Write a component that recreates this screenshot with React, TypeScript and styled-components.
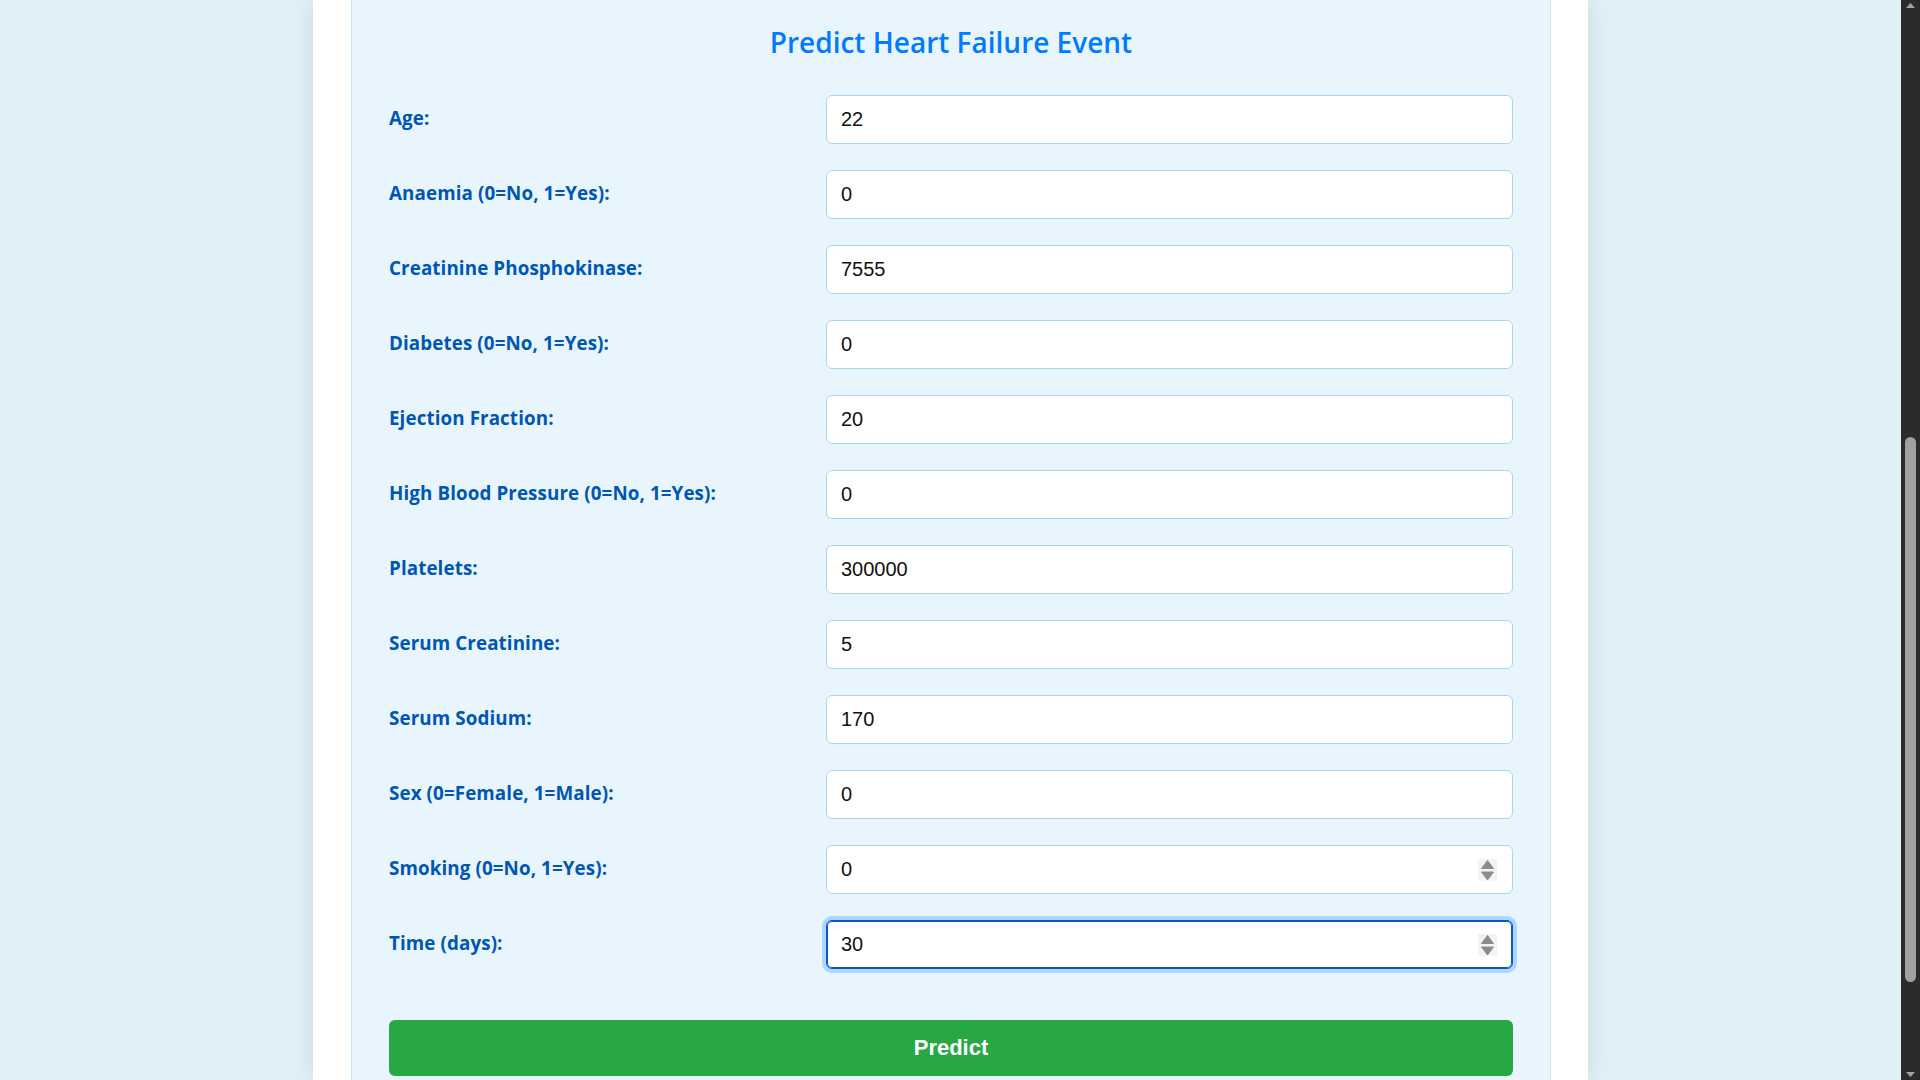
import React from "react";
import styled, { createGlobalStyle, css } from "styled-components";

const GlobalStyle = createGlobalStyle`
  html, body, #root {
    height: 100%;
  }
  body {
    margin: 0;
    background: #e0f0f7;
    font-family: "Open Sans", "Noto Sans", sans-serif;
  }
`;

const Page = styled.div`
  height: 100vh;
  overflow: hidden;
  display: flex;
`;

const Viewport = styled.div`
  flex: 1;
  display: flex;
  justify-content: center;
  overflow: hidden;
`;

const Container = styled.div`
  width: 1275px;
  flex: none;
  box-sizing: border-box;
  background: #ffffff;
  padding: 0 37px 0 38px;
  box-shadow: 0 0 20px rgba(0, 0, 0, 0.1);
  display: flex;
`;

const Panel = styled.div`
  flex: 1;
  background: #e8f5fd;
  border-left: 1px solid #c9e3f6;
  border-right: 1px solid #c9e3f6;
  padding: 25px 37px 0 37px;
  display: flex;
  flex-direction: column;
`;

const Title = styled.h2`
  margin: 0 0 36px;
  text-align: center;
  color: #007bff;
  font-family: "Open Sans", "Noto Sans", sans-serif;
  font-weight: 600;
  font-size: 28px;
  line-height: 34px;
`;

const Form = styled.form`
  display: flex;
  flex-direction: column;
  gap: 26px;
`;

const Row = styled.div`
  display: grid;
  grid-template-columns: 437px 1fr;
  align-items: center;
`;

const Label = styled.label`
  color: #0056b3;
  font-family: "Open Sans", "Noto Sans", sans-serif;
  font-weight: 700;
  font-size: 18.8px;
  line-height: 24px;
  letter-spacing: 0.1px;
  padding-bottom: 4px;
`;

const InputWrap = styled.div`
  position: relative;
  display: flex;
`;

const Input = styled.input<{ $focused?: boolean }>`
  box-sizing: border-box;
  width: 100%;
  height: 49px;
  padding: 0 40px 0 14px;
  border: 1px solid #a9d5f5;
  border-radius: 6px;
  background: #ffffff;
  color: #111111;
  font-family: "Liberation Sans", Arial, sans-serif;
  font-size: 20px;
  outline: none;
  -moz-appearance: textfield;

  &::-webkit-inner-spin-button,
  &::-webkit-outer-spin-button {
    -webkit-appearance: none;
    margin: 0;
  }

  ${(p) =>
    p.$focused &&
    css`
      border-color: #0b57c8;
      box-shadow: inset 0 0 0 1px #0b57c8, 0 0 0 4px #aed7fe;
    `}
`;

const Spinner = styled.svg`
  position: absolute;
  right: 16px;
  top: 50%;
  margin-top: -11px;
  width: 19px;
  height: 22px;
  pointer-events: none;
`;

const Button = styled.button`
  margin-top: 51px;
  height: 56px;
  width: 100%;
  border: none;
  border-radius: 6px;
  background: #28a745;
  color: #ffffff;
  font-family: "Liberation Sans", Arial, sans-serif;
  font-weight: 700;
  font-size: 22px;
  cursor: pointer;
`;

const ScrollBar = styled.svg`
  flex: none;
  width: 19px;
  height: 100vh;
  display: block;
`;

type Field = {
  label: string;
  value: string;
  spin?: boolean;
  focused?: boolean;
};

const fields: Field[] = [
  { label: "Age:", value: "22" },
  { label: "Anaemia (0=No, 1=Yes):", value: "0" },
  { label: "Creatinine Phosphokinase:", value: "7555" },
  { label: "Diabetes (0=No, 1=Yes):", value: "0" },
  { label: "Ejection Fraction:", value: "20" },
  { label: "High Blood Pressure (0=No, 1=Yes):", value: "0" },
  { label: "Platelets:", value: "300000" },
  { label: "Serum Creatinine:", value: "5" },
  { label: "Serum Sodium:", value: "170" },
  { label: "Sex (0=Female, 1=Male):", value: "0" },
  { label: "Smoking (0=No, 1=Yes):", value: "0", spin: true },
  { label: "Time (days):", value: "30", spin: true, focused: true },
];

function SpinIcon() {
  return (
    <Spinner viewBox="0 0 19 22">
      <rect x="0" y="0" width="19" height="22" fill="#f3f3f3" />
      <path d="M9.5 1.5 L15.5 9.5 L3.5 9.5 Z" fill="#8c8c8c" strokeLinejoin="round" stroke="#8c8c8c" strokeWidth="1" />
      <path d="M3.5 13 L15.5 13 L9.5 21 Z" fill="#8c8c8c" strokeLinejoin="round" stroke="#8c8c8c" strokeWidth="1" />
    </Spinner>
  );
}

function BrowserScrollBar() {
  return (
    <ScrollBar viewBox="0 0 19 1080" preserveAspectRatio="none">
      <rect x="0" y="0" width="19" height="1080" fill="#2b2b2b" />
      <path d="M9.5 3 L14 8 L5 8 Z" fill="#a3a3a3" />
      <rect x="4" y="437" width="11" height="545" rx="5.5" fill="#a0a0a0" />
      <path d="M5 1072 L14 1072 L9.5 1077 Z" fill="#a3a3a3" />
    </ScrollBar>
  );
}

export default function App() {
  return (
    <>
      <GlobalStyle />
      <Page>
        <Viewport>
          <Container>
            <Panel>
              <Title>Predict Heart Failure Event</Title>
              <Form onSubmit={(e) => e.preventDefault()}>
                {fields.map((f, i) => (
                  <Row key={i}>
                    <Label htmlFor={`f${i}`}>{f.label}</Label>
                    <InputWrap>
                      <Input
                        id={`f${i}`}
                        type="number"
                        defaultValue={f.value}
                        $focused={f.focused}
                      />
                      {f.spin && <SpinIcon />}
                    </InputWrap>
                  </Row>
                ))}
              </Form>
              <Button type="button">Predict</Button>
            </Panel>
          </Container>
        </Viewport>
        <BrowserScrollBar />
      </Page>
    </>
  );
}
